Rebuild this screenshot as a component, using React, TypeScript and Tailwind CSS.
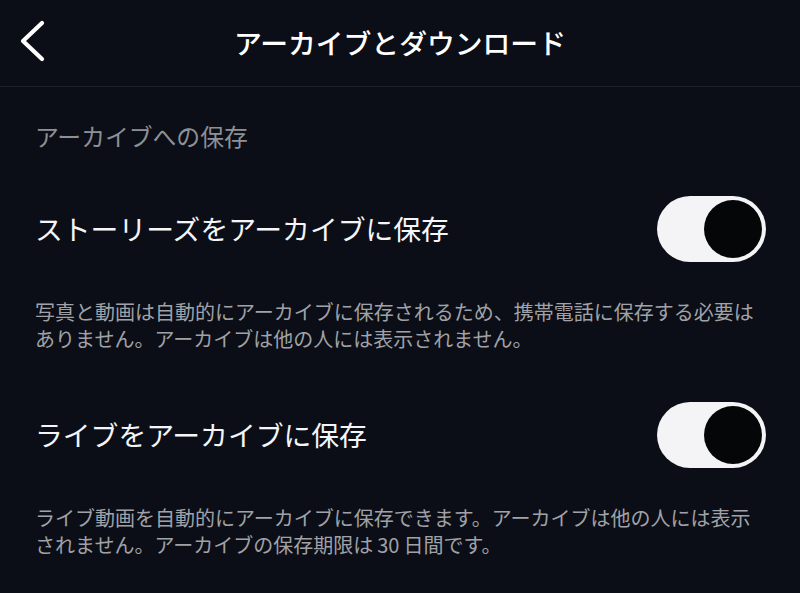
import React, { useState } from 'react';

const font = { fontFamily: '"Noto Sans CJK JP", "Noto Sans", sans-serif' };

function Toggle({ on, onChange }: { on: boolean; onChange: (v: boolean) => void }) {
    return (
        <button
            type="button"
            onClick={() => onChange(!on)}
            className={`w-[109px] h-[66px] rounded-full p-[4px] flex items-center ${on ? 'bg-[#f4f4f6] justify-end' : 'bg-[#3a3b40] justify-start'}`}
        >
            <span className="w-[58px] h-[58px] rounded-full bg-[#050608] block" />
        </button>
    );
}

function SettingRow({ label, desc }: { label: string; desc: string[] }) {
    const [on, setOn] = useState(true);
    return (
        <div>
            <div className="h-[90px] flex items-center justify-between pl-[35px] pr-[34px]">
                <span className="text-[27.8px] text-[#f5f5f7]">{label}</span>
                <Toggle on={on} onChange={setOn} />
            </div>
            <div className="pl-[35px] pr-[20px] pt-[24px] text-[20px] leading-[27px] text-[#a0a2a7]">
                {desc.map(line => (
                    <div key={line} className="whitespace-nowrap">{line}</div>
                ))}
            </div>
        </div>
    );
}

export default function App() {
    return (
        <div style={font} className="w-[800px] h-[593px] bg-[#0b0e16] overflow-hidden flex flex-col">
            {/* Header */}
            <div className="h-[87px] relative flex items-center justify-center border-b border-[#1e2128] shrink-0">
                <button type="button" className="absolute left-[17px] top-[20px] w-[30px] h-[42px]">
                    <svg width="30" height="42" viewBox="0 0 30 42" fill="none">
                        <path d="M25 3 L6 21 L25 39" stroke="#ffffff" strokeWidth="4.2" strokeLinecap="round" strokeLinejoin="round" />
                    </svg>
                </button>
                <h1 className="text-[27.8px] font-medium text-white">アーカイブとダウンロード</h1>
            </div>

            {/* Section title */}
            <div className="h-[97px] flex items-center pl-[35px] text-[23.8px] text-[#8d9096]">
                アーカイブへの保存
            </div>

            <SettingRow
                label="ストーリーズをアーカイブに保存"
                desc={[
                    '写真と動画は自動的にアーカイブに保存されるため、携帯電話に保存する必要は',
                    'ありません。アーカイブは他の人には表示されません。',
                ]}
            />
            <div className="h-[38px]" />
            <SettingRow
                label="ライブをアーカイブに保存"
                desc={[
                    'ライブ動画を自動的にアーカイブに保存できます。アーカイブは他の人には表示',
                    'されません。アーカイブの保存期限は\u200930\u2009日間です。',
                ]}
            />
        </div>
    );
}
